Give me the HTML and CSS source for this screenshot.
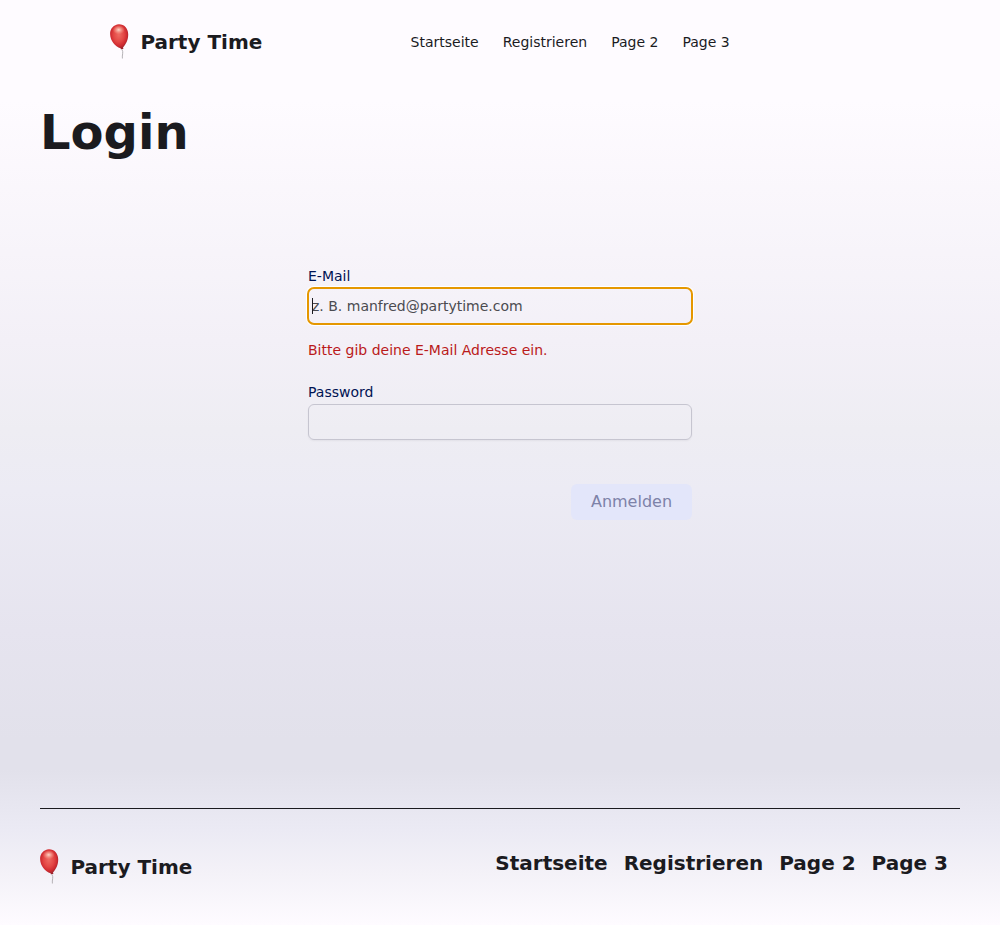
FILE: index.html
```html
<!DOCTYPE html>
<html lang="de">
<head>
<meta charset="utf-8">
<title>Party Time</title>
<link rel="stylesheet" href="styles.css">
</head>
<body>
<svg class="defs" width="0" height="0">
  <defs>
    <radialGradient id="skin" cx="0.48" cy="0.42" r="0.58">
      <stop offset="0" stop-color="#ee6a62"/>
      <stop offset="0.5" stop-color="#e34644"/>
      <stop offset="0.78" stop-color="#cf2a30"/>
      <stop offset="1" stop-color="#96242c"/>
    </radialGradient>
    <radialGradient id="shine">
      <stop offset="0" stop-color="#ffe6d6" stop-opacity="0.9"/>
      <stop offset="1" stop-color="#ffb09c" stop-opacity="0"/>
    </radialGradient>
    <symbol id="balloon" viewBox="0 0 20 36">
      <path d="M12 25.500C13.800 28.500 11.800 31 12.400 34.500" fill="none" stroke="#b5b2b6" stroke-width="1"/>
      <path d="M8.800 0.200C14 0 18.100 4 18.200 10.200C18.300 16 16 20 13 23.600L13.400 25.100L10.900 25.200L10.600 24.200C5 22.500 0.300 17 0.100 10C0 4.500 4 0.500 8.800 0.200Z" fill="url(#skin)"/>
      <ellipse cx="8.700" cy="5.800" rx="6" ry="4.600" fill="url(#shine)"/>
    </symbol>
  </defs>
</svg>
<header class="header">
  <a class="brand"><svg class="balloon"><use href="#balloon"/></svg><span>Party Time</span></a>
  <nav class="nav"><a>Startseite</a><a>Registrieren</a><a>Page 2</a><a>Page 3</a></nav>
</header>
<main class="main">
  <h1 class="title">Login</h1>
  <form class="form">
    <label class="label" for="email">E-Mail</label>
    <div class="field field-focus"><span class="caret"></span><input class="input" id="email" placeholder="z. B. manfred@partytime.com"></div>
    <p class="error">Bitte gib deine E-Mail Adresse ein.</p>
    <label class="label" for="password">Password</label>
    <div class="field"><input class="input" id="password" type="password"></div>
    <button class="submit" type="button" disabled>Anmelden</button>
  </form>
</main>
<footer class="footer">
  <a class="brand"><svg class="balloon"><use href="#balloon"/></svg><span>Party Time</span></a>
  <nav class="footer-nav"><a>Startseite</a><a>Registrieren</a><a>Page 2</a><a>Page 3</a></nav>
</footer>
</body>
</html>
```
FILE: styles.css
```css
* { box-sizing: border-box; }
html { height: 100%; }
body {
  margin: 0;
  height: 925px;
  display: flex;
  flex-direction: column;
  overflow: hidden;
  font-family: "DejaVu Sans", sans-serif;
  font-size: 14px;
  line-height: 20px;
  color: #1b1b1f;
  background: linear-gradient(#fefbff 0, #fefbff 100px, #f3f0f7 340px, #eeedf3 430px, #ecebf4 490px, #e6e4ef 630px, #e2e1eb 740px, #e2e1eb 770px, #ebeaf4 830px, #f4f2f8 875px, #fefbff 925px);
}
.defs { position: absolute; }
.header { display: flex; height: 84px; padding: 0 110px; align-items: center; }
.brand { display: flex; align-items: center; width: 300.6px; font-size: 20px; line-height: 28px; font-weight: 700; }
.balloon { width: 20px; height: 36px; margin-right: 10.4px; }
.nav { display: flex; gap: 24px; }
.main { flex: 1; padding: 0 40px; }
.title { margin: 24px 0 0; font-size: 48px; line-height: 48px; font-weight: 700; }
.form { display: flex; flex-direction: column; width: 384px; margin: 110px auto 0; }
.label { color: #001453; }
.field { position: relative; height: 36px; margin-top: 2px; border: 1px solid #c6c5d0; border-radius: 6px; box-shadow: 0 1px 2px rgba(0,0,0,0.05); }
.field-focus { border-color: transparent; outline: 2px solid #e59700; outline-offset: -1px; box-shadow: 0 0 0 2px #fff; }
.input { display: block; width: 100%; height: 34px; padding: 0 3px; border: 0; outline: 0; background: transparent; font: inherit; color: inherit; }
.input::placeholder { color: #4b4b50; opacity: 1; }
.caret { position: absolute; left: 3px; top: 9px; width: 1px; height: 16px; background: #1b1b1f; }
.error { margin: 16px 0 22px; color: #ba1a1a; }
.submit { align-self: flex-end; width: 121px; height: 36px; margin-top: 44px; padding: 0; border: 0; border-radius: 6px; background: #e3e6fa; color: #7d82a8; font: 16px/24px "DejaVu Sans", sans-serif; }
.footer { display: flex; justify-content: space-between; height: 117px; margin: 0 40px; padding: 40px 12px 0 0; border-top: 1px solid #1b1b1f; align-items: flex-start; }
.footer-nav { display: flex; gap: 16px; font-size: 20px; line-height: 28px; font-weight: 700; }
```
